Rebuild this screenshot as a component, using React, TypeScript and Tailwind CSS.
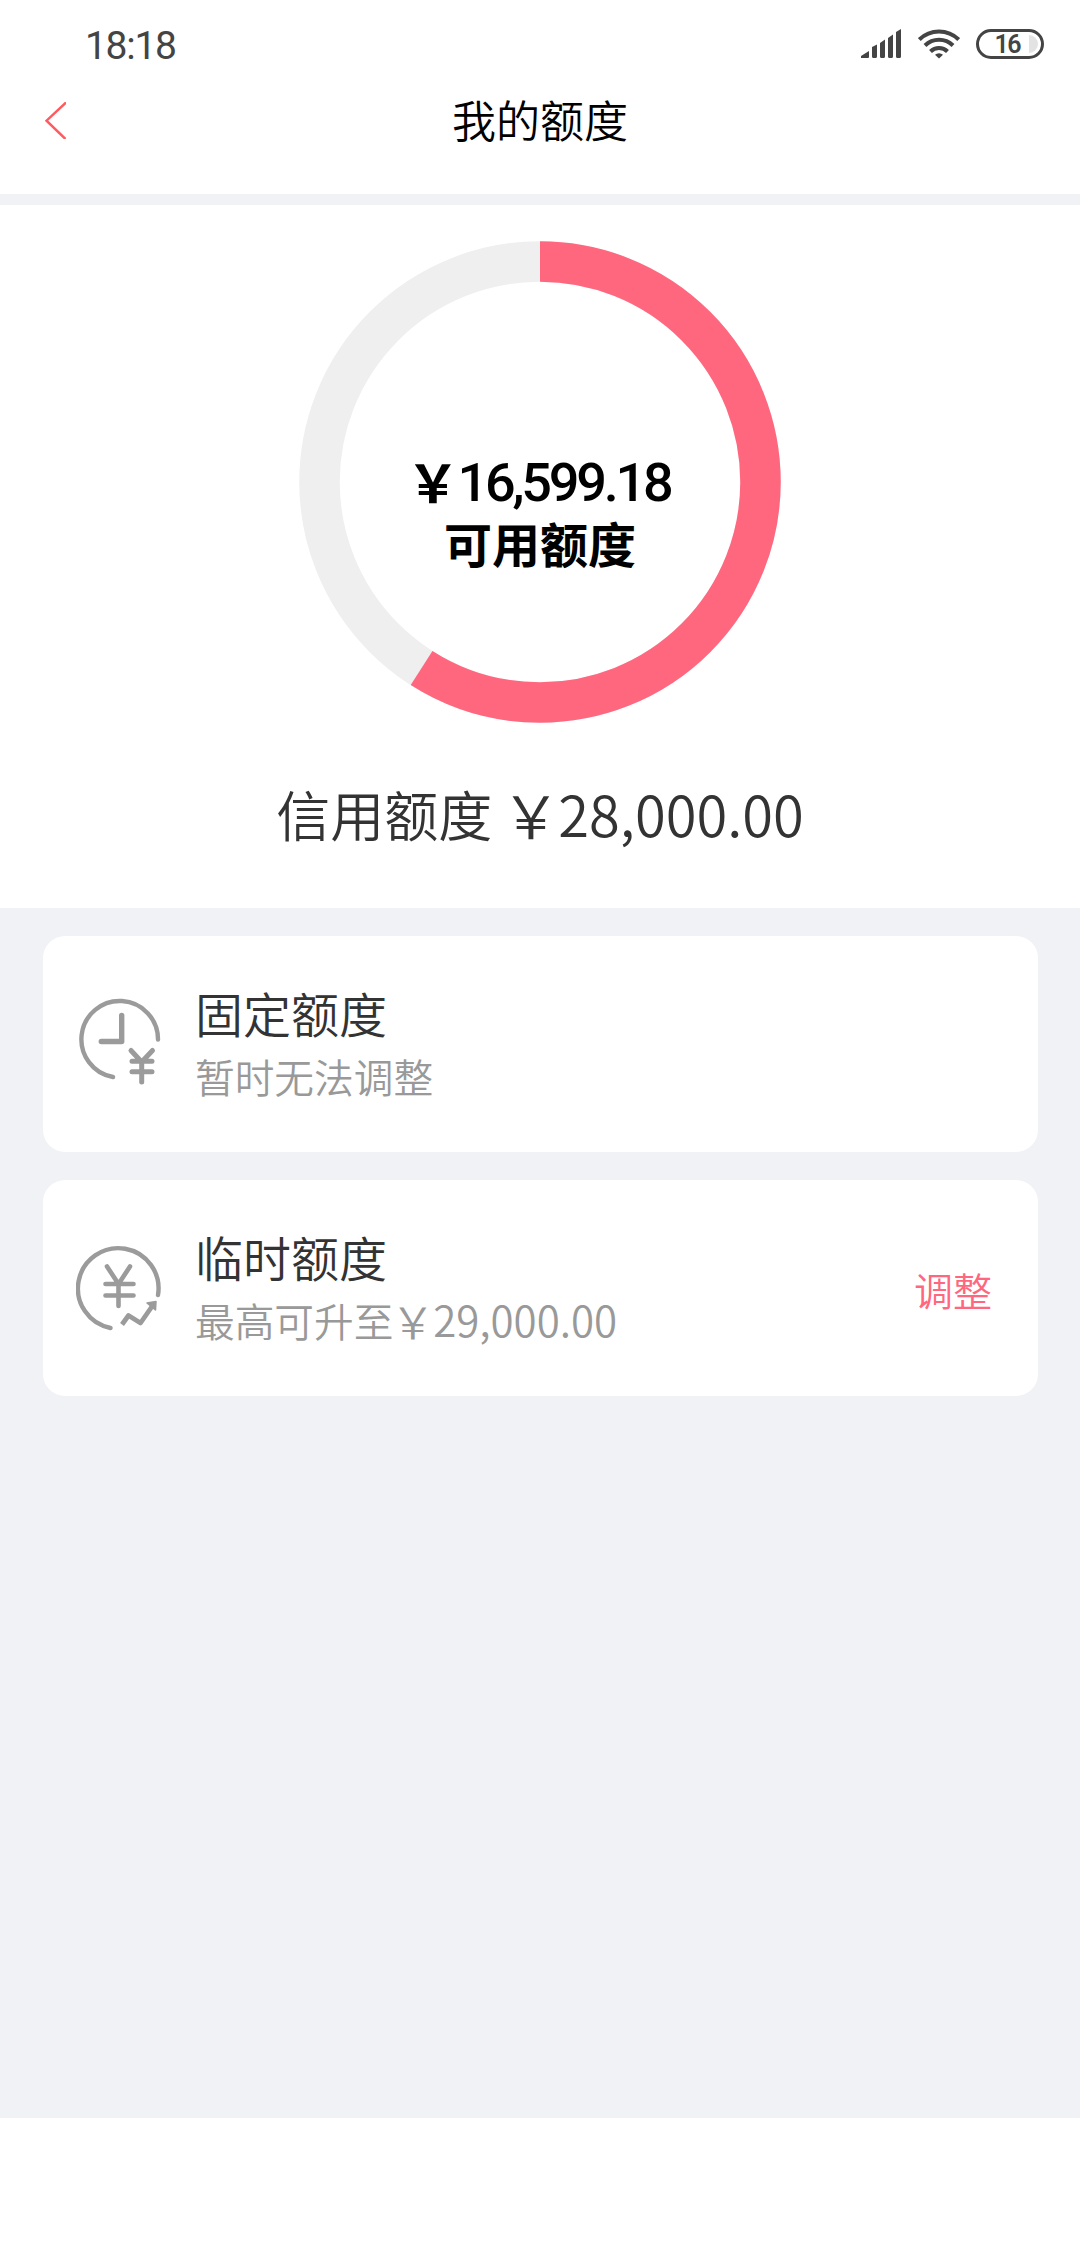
import React from "react";

const total = 28000;
const available = 16599.18;

// fullwidth yuan sign, a bit larger than the text around it
const Yuan = () => <span className="inline-block scale-110">{"\uFFE5"}</span>;

const StatusBar = () => {
  return (
    <div className="flex h-[88px] items-center justify-between pl-[85px] pr-9">
      <span className="pt-1 font-[Roboto] text-[39px] leading-[88px] font-normal tracking-[-1.3px] text-[#444]">18:18</span>
      <div className="flex items-center gap-4">
        <svg width="41" height="30" viewBox="0 0 41 30" fill="#444">
          <path d="M0 29v-2l8-5v6q0 1-1 1zM11 18l5-2.500v12q0 1.500-1.500 1.500h-2q-1.500 0-1.500-1.500zM19 14l5-3.500v17q0 1.500-1.500 1.500h-2q-1.500 0-1.500-1.500zM27 9l5-3.500v22q0 1.500-1.500 1.500h-2q-1.500 0-1.500-1.500zM35 3l5-3v27.500q0 1.500-1.500 1.500h-2q-1.500 0-1.500-1.500z" />
        </svg>
        <svg width="42" height="30" viewBox="0 0 42 30" fill="none" stroke="#444" strokeWidth="4">
          <path d="M1.300 10.500a28 28 0 0 1 39.400 0M7 16.500a20 20 0 0 1 28 0M12.500 22.500a12 12 0 0 1 17 0" />
          <path d="M21 29.500l-4-3.800a6 6 0 0 1 8 0z" fill="#444" stroke="none" />
        </svg>
        <div className="flex h-[30px] w-[68px] items-center justify-end rounded-full border-3 border-[#444] pr-[3px]">
          <span className="mr-[9px] pt-px font-[Roboto] text-[25px] leading-none font-semibold tracking-[-1.5px] text-[#444]">16</span>
          <div className="h-[18px] w-[9px] rounded-r-full bg-[#e3e3e3]" />
        </div>
      </div>
    </div>
  );
};

const Header = () => {
  return (
    <div className="grid h-[106px] grid-cols-[1fr_auto_1fr] items-start px-[45px]">
      <button className="mt-[14px] w-[21px]">
        <svg width="21" height="37" viewBox="0 0 21 37" fill="none" stroke="#ff5a5f" strokeWidth="2.500">
          <path d="M21 0.500L1.500 18.700L20.500 37" />
        </svg>
      </button>
      <h1 className="text-[44px] leading-[63px] font-[350] text-black">我的额度</h1>
    </div>
  );
};

const Ring = () => {
  const radius = 220.5;
  const length = 2 * Math.PI * radius;
  const percent = Math.floor((available / total) * 100);
  return (
    <div className="grid h-[482px] w-[482px] place-items-center">
      <svg className="col-start-1 row-start-1" width="482" height="482" fill="none" strokeWidth="40.500">
        <circle cx="241" cy="241" r={radius} stroke="#efefef" />
        <circle
          cx="241"
          cy="241"
          r={radius}
          stroke="#ff677f"
          strokeDasharray={`${(length * percent) / 100} ${length}`}
          transform="rotate(-90 241 241)"
        />
      </svg>
      <div className="col-start-1 row-start-1 mt-[57px] text-center text-[48px] leading-[62px] text-black">
        <p className="font-bold whitespace-nowrap">
          <Yuan />
          <span className="font-[Roboto] text-[54px] leading-none font-medium tracking-[-3.2px]">16,599.18</span>
        </p>
        <p className="font-bold">可用额度</p>
      </div>
    </div>
  );
};

const FixedIcon = () => {
  return (
    <svg width="86" height="94" viewBox="0 0 86 94" fill="none" stroke="#9b9b9b" strokeLinecap="round" strokeLinejoin="round">
      <path d="M82 42.500A38.300 38.300 0 1 0 37 80" strokeWidth="4.400" />
      <path d="M45.700 18.500V44.500H25.300" strokeWidth="5.400" />
      <path d="M55 53.500L65.700 65L76.500 53.500M56 64.300H76M56 74.700H76M65.700 65V85" strokeWidth="5" />
    </svg>
  );
};

const TempIcon = () => {
  return (
    <svg width="86" height="88" viewBox="0 0 86 88" fill="none" stroke="#9b9b9b" strokeLinecap="round" strokeLinejoin="round">
      <path d="M82 51A40.300 40.300 0 1 0 34.500 84" strokeWidth="4.400" />
      <path d="M31 22.500L42.500 40L54 22.500M29.500 40H57.500M29.500 51.500H57.500M42.500 40V62" strokeWidth="4.600" />
      <path d="M46 80.500L52.500 71.500L64.500 79L77 61" strokeWidth="4.800" strokeLinecap="butt" />
      <path d="M71 59L80 57.500L79.500 66z" fill="#9b9b9b" strokeWidth="1.500" />
    </svg>
  );
};

const cards = [
  {
    title: "固定额度",
    note: "暂时无法调整",
    amount: "",
    action: "",
    icon: <FixedIcon />,
  },
  {
    title: "临时额度",
    note: "最高可升至",
    amount: "29,000.00",
    action: "调整",
    icon: <TempIcon />,
  },
];

const App = () => {
  return (
    <div className="flex h-[2248px] w-[1080px] flex-col bg-white font-['Noto_Sans_CJK_SC',sans-serif]">
      <StatusBar />
      <Header />
      <div className="h-[11px] bg-[#f1f2f6]" />

      <div className="flex h-[703px] flex-col items-center pt-9">
        <Ring />
        <p className="mt-[46px] text-[54px] leading-[90px] font-[350] whitespace-pre text-[#333]">
          信用额度 <Yuan />
          <span className="text-[56px] leading-none">28,000.00</span>
        </p>
      </div>

      <div className="flex h-[1210px] flex-col gap-7 bg-[#f1f2f6] px-[43px] pt-7">
        {cards.map((card) => (
          <div key={card.title} className="flex h-[216px] w-[995px] items-center rounded-[22px] bg-white pr-[46px] pl-[33px]">
            {card.icon}
            <div className="ml-[33px] flex-1">
              <h2 className="text-[48px] leading-[64px] font-[350] text-[#333]">{card.title}</h2>
              <p className="text-[39.7px] leading-[64px] font-[350] text-[#999]">
                {card.note}
                {card.amount && <Yuan />}
                <span className="text-[42px] leading-none">{card.amount}</span>
              </p>
            </div>
            {card.action && <button className="pt-[2px] text-[39px] leading-none font-[350] text-[#ff677f]">{card.action}</button>}
          </div>
        ))}
      </div>
    </div>
  );
};

export default App;
